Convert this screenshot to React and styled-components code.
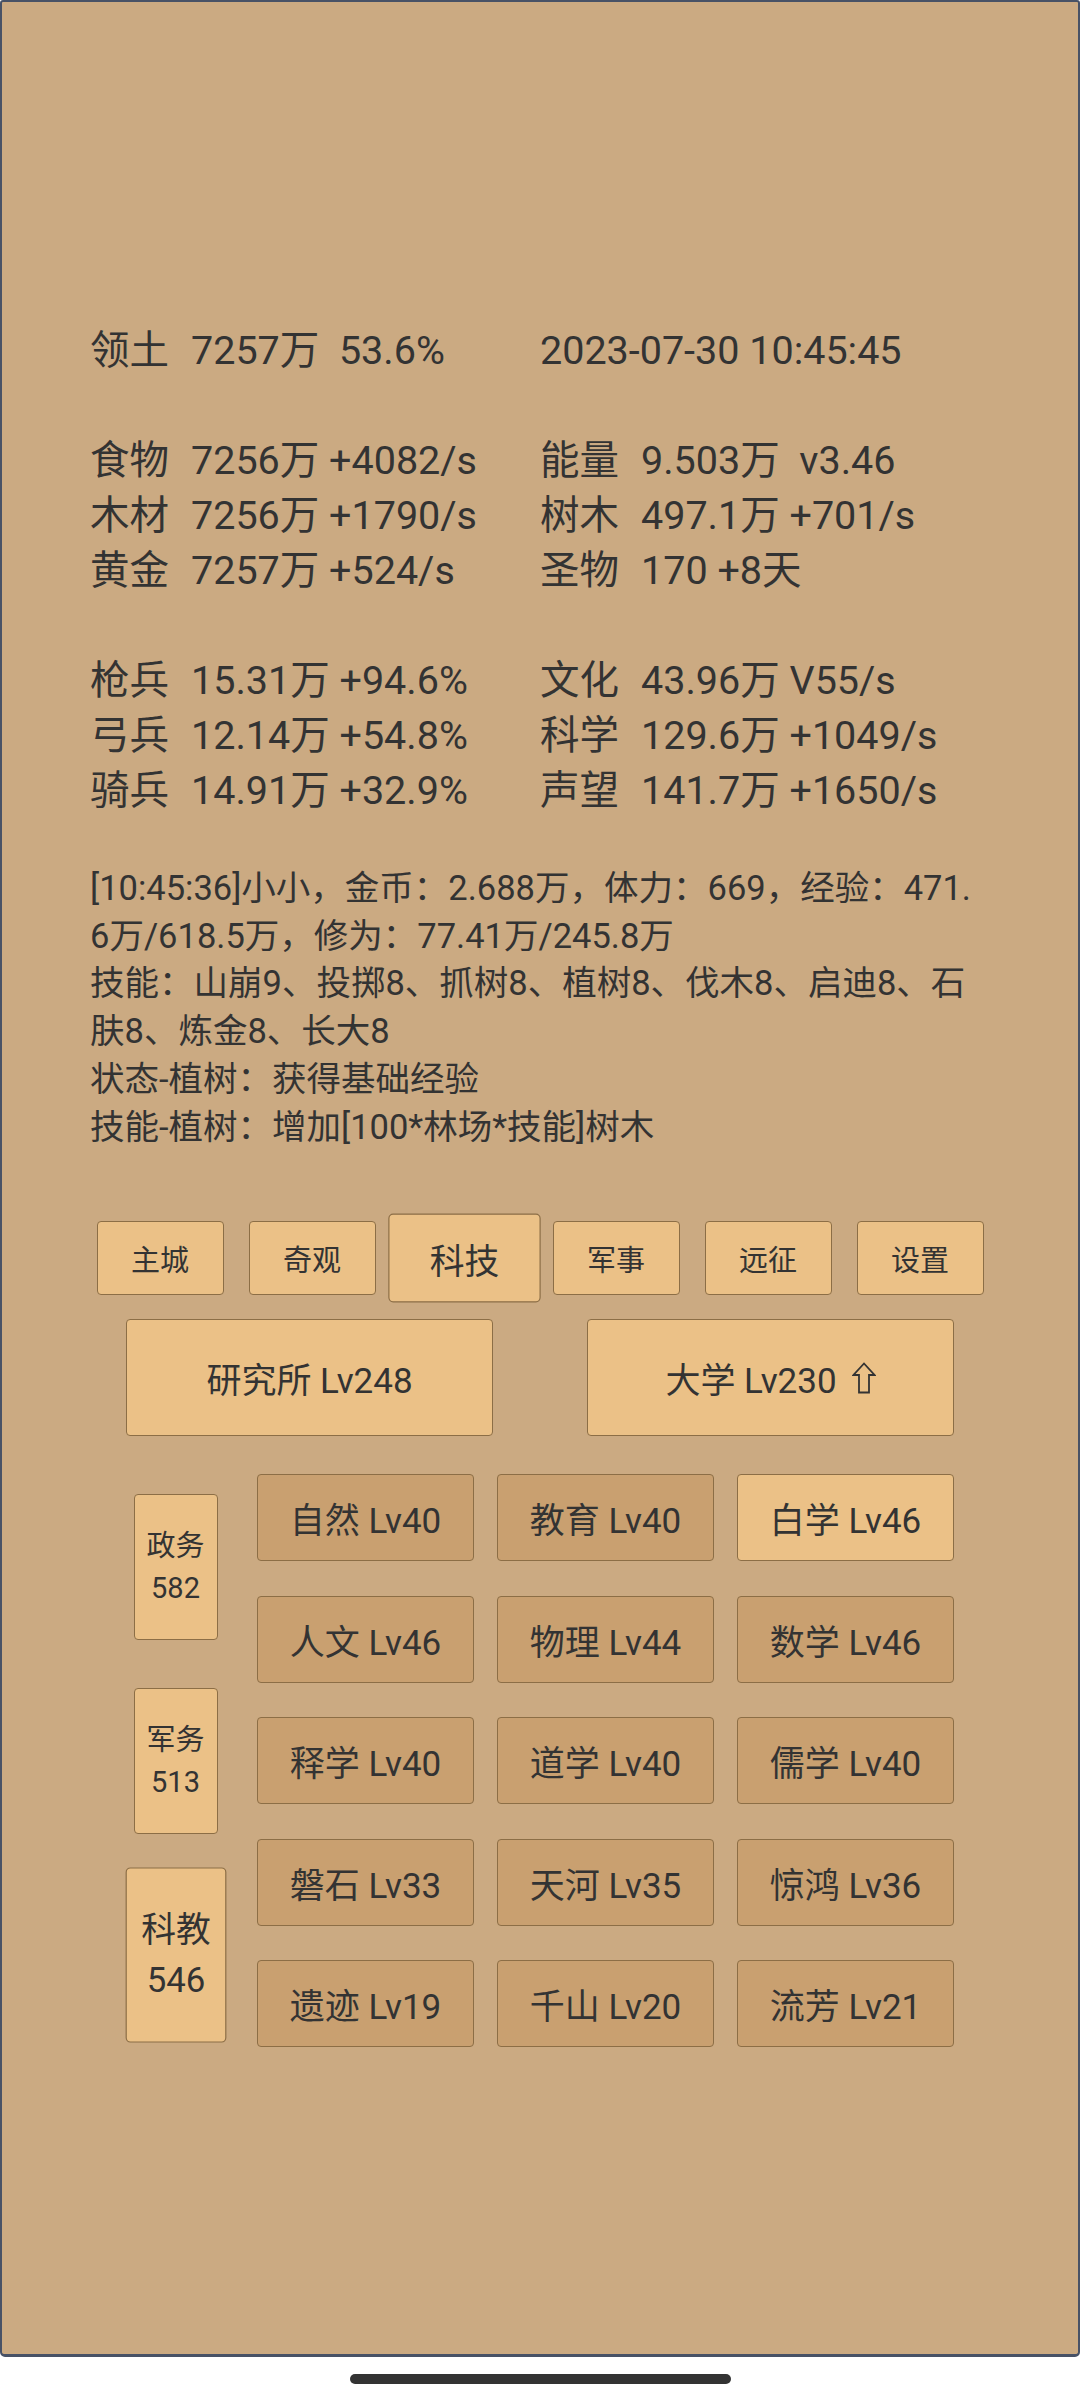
import React from "react";
import styled, { createGlobalStyle } from "styled-components";

const GlobalStyle = createGlobalStyle`
  html, body {
    margin: 0;
    padding: 0;
    background: #ffffff;
  }
  body {
    font-family: Roboto, "Noto Sans CJK SC", sans-serif;
    color: #333333;
  }
  * {
    box-sizing: border-box;
  }
`;

const Screen = styled.div`
  width: 1080px;
  height: 2357px;
  background: #cbaa82;
  border: 2px solid #485266;
  border-bottom-width: 3px;
  border-radius: 3px 3px 5px 5px;
  padding: 321px 88px 0;
  display: flex;
  flex-direction: column;
  align-items: center;
`;

const Stats = styled.div`
  width: 100%;
  font-size: 39.5px;
  line-height: 55px;
`;

const StatGroup = styled.div`
  display: grid;
  grid-template-columns: 1fr 1fr;
  & + & {
    margin-top: 55px;
  }
`;

const StatCell = styled.div`
  white-space: pre;
`;

const StatLabel = styled.span`
  display: inline-block;
  margin-right: 22px;
`;

const Log = styled.div`
  width: 100%;
  margin-top: 47px;
  font-size: 34.5px;
  line-height: 47.7px;
  word-break: break-all;
`;

const Tabs = styled.div`
  margin-top: 70px;
  display: flex;
  align-items: center;
  justify-content: center;
  gap: 25px;
`;

const Tab = styled.div`
  width: 127px;
  height: 74px;
  display: flex;
  align-items: center;
  justify-content: center;
  background: #ebc187;
  border: 1px solid #8c6e46;
  border-radius: 4px;
  font-size: 29px;
  transform: ${(p) => (p.$active ? "scale(1.2)" : "none")};
`;

const BigRow = styled.div`
  width: 828px;
  margin-top: 24px;
  display: flex;
  justify-content: space-between;
`;

const BigButton = styled.div`
  width: 367px;
  height: 117px;
  display: flex;
  align-items: center;
  justify-content: center;
  background: #ebc187;
  border: 1px solid #8c6e46;
  border-radius: 4px;
  font-size: 35px;
`;

const UpArrow = styled.svg`
  width: 24px;
  height: 32px;
  margin-left: 15px;
  flex-shrink: 0;
`;

const TechArea = styled.div`
  width: 828px;
  margin-top: 38px;
  display: flex;
  justify-content: space-between;
  align-items: center;
`;

const Sidebar = styled.div`
  width: 99px;
  display: flex;
  flex-direction: column;
  align-items: center;
  gap: 48px;
`;

const SideItem = styled.div`
  width: 84px;
  height: 146px;
  display: flex;
  flex-direction: column;
  align-items: center;
  justify-content: center;
  background: #ebc187;
  border: 1px solid #8c6e46;
  border-radius: 4px;
  font-size: 29px;
  line-height: 42px;
  transform: ${(p) => (p.$active ? "scale(1.2)" : "none")};
`;

const TechGrid = styled.div`
  display: grid;
  grid-template-columns: repeat(3, 217px);
  grid-auto-rows: 87px;
  column-gap: 23px;
  row-gap: 34.5px;
`;

const TechButton = styled.div`
  display: flex;
  align-items: center;
  justify-content: center;
  background: ${(p) => (p.$lit ? "#ebc187" : "#c9a070")};
  border: 1px solid #8c6e46;
  border-radius: 4px;
  font-size: 35px;
  white-space: pre;
`;

const HomeBar = styled.div`
  width: 381px;
  height: 10px;
  margin: 17px auto 0;
  border-radius: 5px;
  background: #333333;
`;

const statGroups = [
  [
    ["领土", "7257万  53.6%"],
    [null, "2023-07-30 10:45:45"],
  ],
  [
    ["食物", "7256万 +4082/s"],
    ["能量", "9.503万  v3.46"],
    ["木材", "7256万 +1790/s"],
    ["树木", "497.1万 +701/s"],
    ["黄金", "7257万 +524/s"],
    ["圣物", "170 +8天"],
  ],
  [
    ["枪兵", "15.31万 +94.6%"],
    ["文化", "43.96万 V55/s"],
    ["弓兵", "12.14万 +54.8%"],
    ["科学", "129.6万 +1049/s"],
    ["骑兵", "14.91万 +32.9%"],
    ["声望", "141.7万 +1650/s"],
  ],
];

const logLines = [
  "[10:45:36]小小，金币：2.688万，体力：669，经验：471.6万/618.5万，修为：77.41万/245.8万",
  "技能：山崩9、投掷8、抓树8、植树8、伐木8、启迪8、石肤8、炼金8、长大8",
  "状态-植树：获得基础经验",
  "技能-植树：增加[100*林场*技能]树木",
];

const tabs = ["主城", "奇观", "科技", "军事", "远征", "设置"];

const sideItems = [
  ["政务", "582"],
  ["军务", "513"],
  ["科教", "546"],
];

const techs = [
  ["自然", 40],
  ["教育", 40],
  ["白学", 46, true],
  ["人文", 46],
  ["物理", 44],
  ["数学", 46],
  ["释学", 40],
  ["道学", 40],
  ["儒学", 40],
  ["磐石", 33],
  ["天河", 35],
  ["惊鸿", 36],
  ["遗迹", 19],
  ["千山", 20],
  ["流芳", 21],
];

export default function App() {
  return (
    <>
      <GlobalStyle />
      <Screen>
        <Stats>
          {statGroups.map((group, gi) => (
            <StatGroup key={gi}>
              {group.map(([label, value], i) => (
                <StatCell key={i}>
                  {label && <StatLabel>{label}</StatLabel>}
                  {value}
                </StatCell>
              ))}
            </StatGroup>
          ))}
        </Stats>

        <Log>
          {logLines.map((line, i) => (
            <div key={i}>{line}</div>
          ))}
        </Log>

        <Tabs>
          {tabs.map((t) => (
            <Tab key={t} $active={t === "科技"}>
              {t}
            </Tab>
          ))}
        </Tabs>

        <BigRow>
          <BigButton>研究所 Lv248</BigButton>
          <BigButton>
            大学 Lv230
            <UpArrow viewBox="0 0 24 32">
              <polygon
                points="12,1.5 1.5,13 7,13 7,30.5 17,30.5 17,13 22.5,13"
                fill="none"
                stroke="#333333"
                strokeWidth="1.8"
                strokeLinejoin="miter"
              />
            </UpArrow>
          </BigButton>
        </BigRow>

        <TechArea>
          <Sidebar>
            {sideItems.map(([name, num]) => (
              <SideItem key={name} $active={name === "科教"}>
                <span>{name}</span>
                <span>{num}</span>
              </SideItem>
            ))}
          </Sidebar>
          <TechGrid>
            {techs.map(([name, lv, lit]) => (
              <TechButton key={name} $lit={lit}>
                {`${name} Lv${lv}`}
              </TechButton>
            ))}
          </TechGrid>
        </TechArea>
      </Screen>
      <HomeBar />
    </>
  );
}
